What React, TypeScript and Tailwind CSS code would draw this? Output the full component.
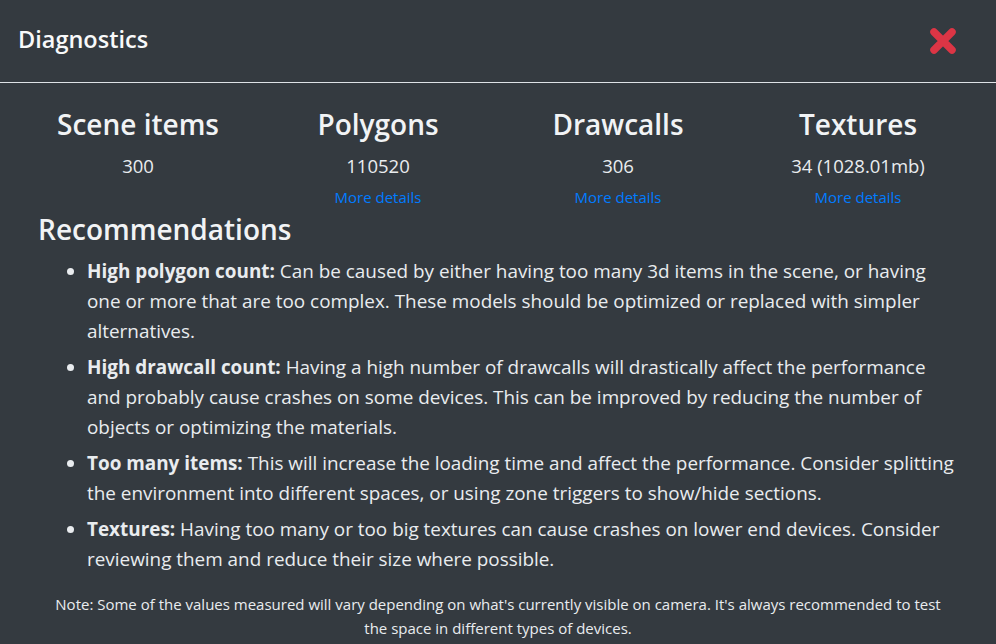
const stats = [
  { label: "Scene items", value: "300", details: false },
  { label: "Polygons", value: "110520", details: true },
  { label: "Drawcalls", value: "306", details: true },
  { label: "Textures", value: "34 (1028.01mb)", details: true },
];

const tips = [
  {
    title: "High polygon count:",
    body: "Can be caused by either having too many 3d items in the scene, or having one or more that are too complex. These models should be optimized or replaced with simpler alternatives.",
  },
  {
    title: "High drawcall count:",
    body: "Having a high number of drawcalls will drastically affect the performance and probably cause crashes on some devices. This can be improved by reducing the number of objects or optimizing the materials.",
  },
  {
    title: "Too many items:",
    body: "This will increase the loading time and affect the performance. Consider splitting the environment into different spaces, or using zone triggers to show/hide sections.",
  },
  {
    title: "Textures:",
    body: "Having too many or too big textures can cause crashes on lower end devices. Consider reviewing them and reduce their size where possible.",
  },
];

function CloseIcon() {
  return (
    <svg viewBox="0 0 28 28" className="h-[28px] w-[28px]" aria-hidden="true">
      <path d="M5 5 L23 23 M23 5 L5 23" stroke="#dc3545" strokeWidth="7.5" strokeLinecap="round" fill="none" />
    </svg>
  );
}

export default function App() {
  return (
    <div
      className="h-[644px] w-[996px] overflow-hidden bg-[#343a40] text-[#e9ecef]"
      style={{ fontFamily: '"Open Sans", "Noto Sans", sans-serif' }}
    >
      <div className="flex h-[83px] items-center justify-between border-b border-[#dee2e6] pl-[18px] pr-[39px]">
        <h5 className="-mt-[2px] text-[23.5px] font-semibold text-[#f8f9fa]">Diagnostics</h5>
        <CloseIcon />
      </div>

      <div className="px-[18px] pt-[23px]">
        <div className="grid grid-cols-4">
          {stats.map((s) => (
            <div key={s.label} className="flex flex-col items-center">
              <h3 className="text-[28px] font-semibold leading-[36px] text-[#f1f3f5]">{s.label}</h3>
              <p className="mt-[12px] text-[18.5px] leading-[24px]">{s.value}</p>
              {s.details ? (
                <a className="mt-[9px] text-[15px] leading-[20px] text-[#007bff]" href="#">
                  More details
                </a>
              ) : (
                <span className="mt-[9px] h-[20px]" />
              )}
            </div>
          ))}
        </div>

        <h3 className="mt-[4px] pl-[20px] text-[28px] font-semibold leading-[36px] text-[#f1f3f5]">
          Recommendations
        </h3>

        <ul className="mt-[9px] list-disc space-y-[6px] pl-[69px] pr-[17px] text-[18.9px] leading-[30px]">
          {tips.map((t) => (
            <li key={t.title}>
              <strong className="font-bold">{t.title}</strong> {t.body}
            </li>
          ))}
        </ul>

        <p className="mx-auto mt-[18px] w-[910px] text-center text-[15px] leading-[24px]">
          Note: Some of the values measured will vary depending on what's currently visible on camera. It's always
          recommended to test the space in different types of devices.
        </p>
      </div>
    </div>
  );
}
